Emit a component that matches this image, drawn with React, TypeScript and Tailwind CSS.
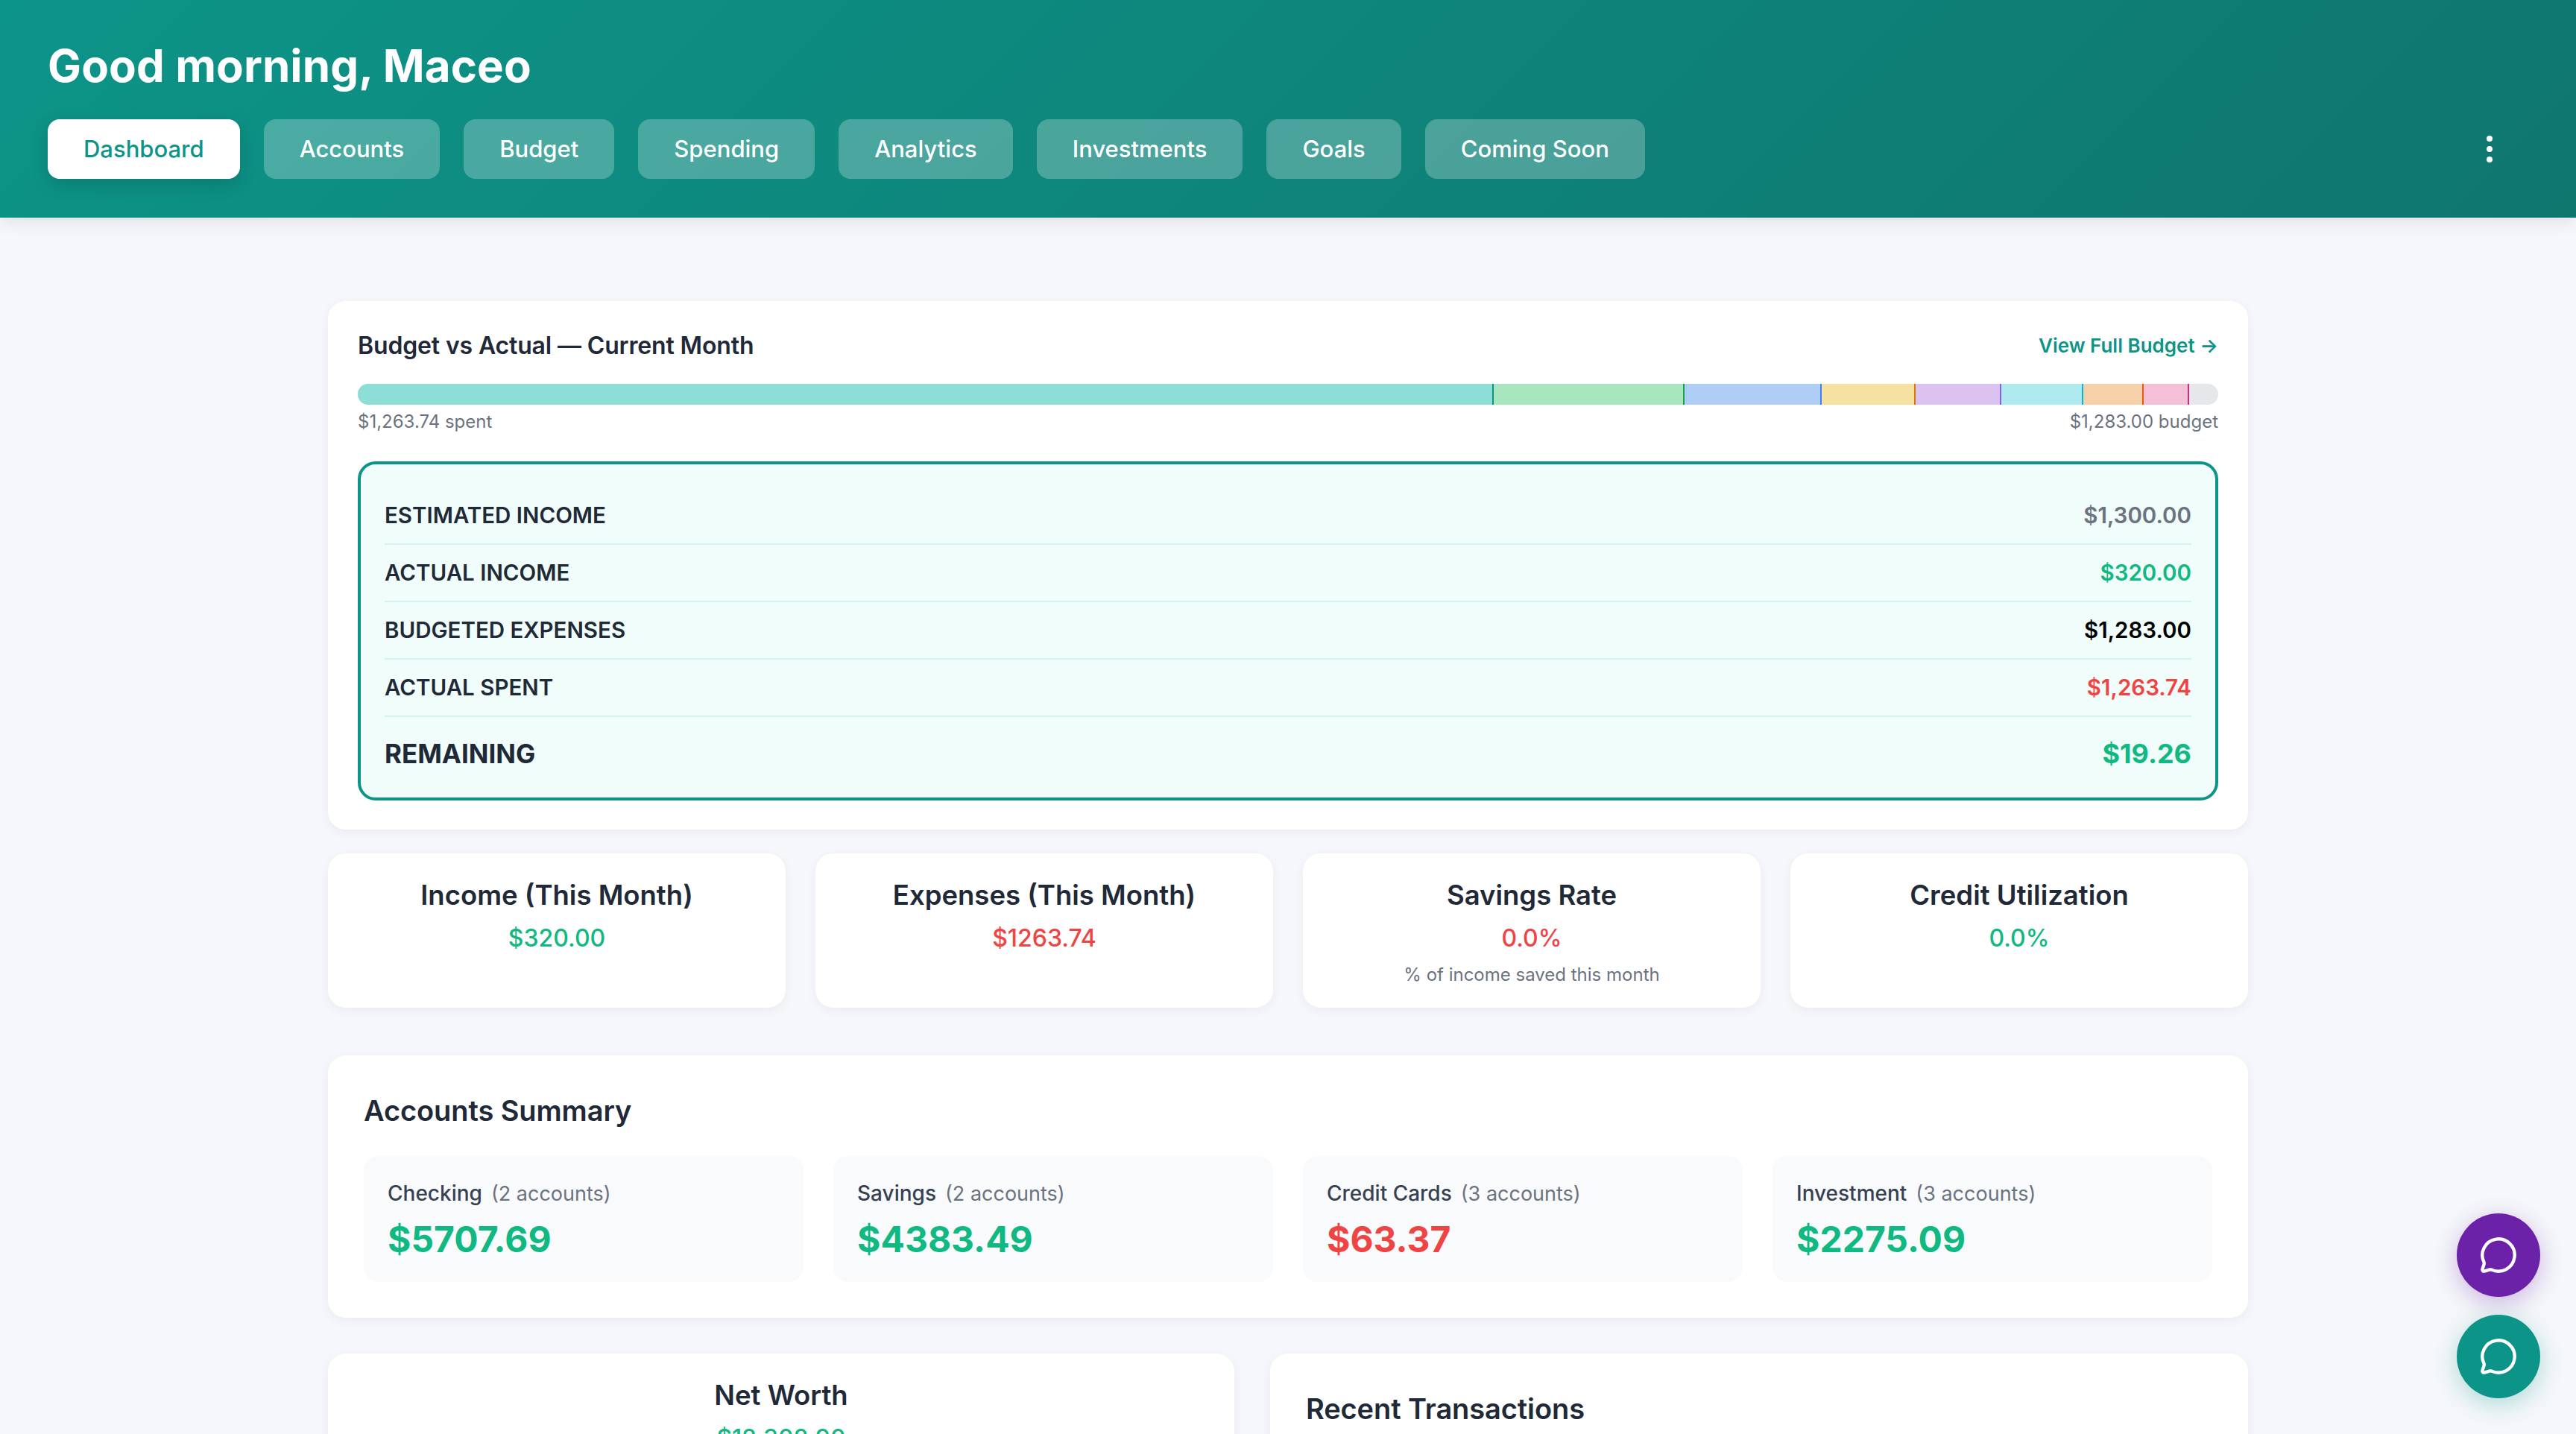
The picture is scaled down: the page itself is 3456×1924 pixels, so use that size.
import { MessageCircle, MoreVertical } from 'lucide-react';

const tabs = ['Dashboard', 'Accounts', 'Budget', 'Spending', 'Analytics', 'Investments', 'Goals', 'Coming Soon'];

const segments = [
  { width: '61.06%', className: 'bg-[#8cded6] border-[#0d9488]' },
  { width: '10.24%', className: 'bg-[#a8e6c0] border-[#16a34a]' },
  { width: '7.39%', className: 'bg-[#aecef5] border-[#3b82f6]' },
  { width: '5.05%', className: 'bg-[#f5e2a0] border-[#d97706]' },
  { width: '4.61%', className: 'bg-[#dbc2f0] border-[#8b5cf6]' },
  { width: '4.41%', className: 'bg-[#aeeaf0] border-[#06b6d4]' },
  { width: '3.25%', className: 'bg-[#f6d0a8] border-[#ea580c]' },
  { width: '2.44%', className: 'bg-[#f4c0d8] border-[#db2777]' },
];

const rows = [
  { label: 'ESTIMATED INCOME', value: '$1,300.00', color: 'text-[#6b7280]' },
  { label: 'ACTUAL INCOME', value: '$320.00', color: 'text-[#10b981]' },
  { label: 'BUDGETED EXPENSES', value: '$1,283.00', color: 'text-[#000000]' },
  { label: 'ACTUAL SPENT', value: '$1,263.74', color: 'text-[#ef4444]' },
];

const stats = [
  { title: 'Income (This Month)', value: '$320.00', color: 'text-[#10b981]' },
  { title: 'Expenses (This Month)', value: '$1263.74', color: 'text-[#ef4444]' },
  { title: 'Savings Rate', value: '0.0%', color: 'text-[#ef4444]', note: '% of income saved this month' },
  { title: 'Credit Utilization', value: '0.0%', color: 'text-[#10b981]' },
];

const accounts = [
  { name: 'Checking', count: '(2 accounts)', value: '$5707.69', color: 'text-[#10b981]' },
  { name: 'Savings', count: '(2 accounts)', value: '$4383.49', color: 'text-[#10b981]' },
  { name: 'Credit Cards', count: '(3 accounts)', value: '$63.37', color: 'text-[#ef4444]' },
  { name: 'Investment', count: '(3 accounts)', value: '$2275.09', color: 'text-[#10b981]' },
];

export default function App() {
  return (
    <div className="relative h-[1924px] overflow-hidden bg-[#f5f7fa] font-['Inter',sans-serif] text-[#1f2937]">
      {/* Header */}
      <header className="h-[292px] bg-[linear-gradient(135deg,#0d9488,#0f766e)] px-16 pt-[50px] shadow-[0_4px_24px_rgba(0,0,0,0.1)]">
        <h1 className="text-[60px] leading-[76px] font-bold tracking-[0.1px] text-white">Good morning, Maceo</h1>
        <div className="mt-[34px] flex items-center justify-between">
          <nav className="flex gap-8">
            {tabs.map((tab, i) => (
              <button
                key={tab}
                className={
                  i === 0
                    ? 'h-20 rounded-2xl bg-white px-12 text-[31px] font-medium text-[#0d9488] shadow-[0_8px_24px_rgba(0,0,0,0.15)]'
                    : 'h-20 rounded-2xl bg-white/25 px-12 text-[31px] font-medium text-white'
                }
              >
                {tab}
              </button>
            ))}
          </nav>
          <MoreVertical size={48} className="mr-[28px] text-white" />
        </div>
      </header>

      <main className="mx-auto mt-[112px] w-[2576px]">
        {/* Budget vs Actual */}
        <section className="h-[709px] rounded-3xl bg-white px-10 pt-[40px] shadow-[0_4px_16px_rgba(0,0,0,0.05)]">
          <div className="flex items-center justify-between">
            <h2 className="text-[32px] leading-[38px] font-semibold tracking-[-0.15px]">Budget vs Actual — Current Month</h2>
            <a className="text-[26px] font-semibold text-[#0d9488]">View Full Budget →</a>
          </div>
          <div className="mt-[32px] flex h-7 overflow-hidden rounded-full bg-[#e5e7eb]">
            {segments.map((s) => (
              <div key={s.width} className={`border-r-2 ${s.className}`} style={{ width: s.width }} />
            ))}
          </div>
          <div className="mt-[8px] flex justify-between text-[24px] leading-[30px] text-[#6b7280]">
            <span>$1,263.74 spent</span>
            <span>$1,283.00 budget</span>
          </div>
          <div className="mt-[38px] h-[455px] rounded-3xl border-4 border-[#0d9488] bg-[#f0fdfa] px-8 pt-[31px]">
            {rows.map((r) => (
              <div key={r.label} className="flex h-[77px] items-center justify-between border-b-2 border-[#d3f3ef]">
                <span className="text-[29.5px] font-semibold">{r.label}</span>
                <span className={`text-[29.5px] font-semibold ${r.color}`}>{r.value}</span>
              </div>
            ))}
            <div className="flex h-[98px] items-center justify-between">
              <span className="text-[35px] font-bold">REMAINING</span>
              <span className="text-[36px] font-bold text-[#10b981]">$19.26</span>
            </div>
          </div>
        </section>

        {/* Stats */}
        <section className="mt-8 grid grid-cols-4 gap-10">
          {stats.map((s) => (
            <div key={s.title} className="h-[207px] rounded-3xl bg-white pt-[32px] text-center shadow-[0_4px_16px_rgba(0,0,0,0.05)]">
              <h3 className="text-[36.5px] leading-[48px] font-semibold">{s.title}</h3>
              <p className={`mt-[14px] text-[32px] leading-[40px] font-medium ${s.color}`}>{s.value}</p>
              {s.note && <p className="mt-[14px] text-[24px] leading-[30px] text-[#6b7280]">{s.note}</p>}
            </div>
          ))}
        </section>

        {/* Accounts Summary */}
        <section className="mt-16 h-[352px] rounded-3xl bg-white px-12 pt-[50px] shadow-[0_4px_16px_rgba(0,0,0,0.05)]">
          <h2 className="text-[38px] leading-[48px] font-semibold tracking-[-0.1px]">Accounts Summary</h2>
          <div className="mt-[37px] grid grid-cols-4 gap-10">
            {accounts.map((a) => (
              <div key={a.name} className="h-[169px] rounded-[20px] bg-[#f9fafc] px-8 pt-[32px]">
                <div className="flex items-baseline gap-3 leading-[36px]">
                  <span className="text-[28px] font-medium text-[#374151]">{a.name}</span>
                  <span className="text-[27px] text-[#6b7280]">{a.count}</span>
                </div>
                <p className={`mt-[11px] text-[48px] leading-[64px] font-bold ${a.color}`}>{a.value}</p>
              </div>
            ))}
          </div>
        </section>

        {/* Lower cards */}
        <section className="mt-12 flex gap-12">
          <div className="h-[400px] w-[1216px] rounded-3xl bg-white pt-[32px] text-center shadow-[0_4px_16px_rgba(0,0,0,0.05)]">
            <h3 className="text-[36.5px] leading-[48px] font-semibold">Net Worth</h3>
            <p className="mt-[14px] text-[32px] leading-[40px] font-medium text-[#10b981]">$12,302.90</p>
          </div>
          <div className="h-[400px] flex-1 rounded-3xl bg-white px-12 pt-[50px] shadow-[0_4px_16px_rgba(0,0,0,0.05)]">
            <h2 className="text-[38px] leading-[48px] font-semibold tracking-[-0.1px]">Recent Transactions</h2>
          </div>
        </section>
      </main>

      {/* Chat buttons */}
      <div className="absolute right-12 bottom-12 flex flex-col gap-6">
        <button className="flex h-28 w-28 items-center justify-center rounded-full bg-[#6b21a8] text-white shadow-[0_8px_32px_rgba(107,33,168,0.3)]">
          <MessageCircle size={52} />
        </button>
        <button className="flex h-28 w-28 items-center justify-center rounded-full bg-[#0d9488] text-white shadow-[0_8px_32px_rgba(13,148,136,0.3)]">
          <MessageCircle size={52} />
        </button>
      </div>
    </div>
  );
}
